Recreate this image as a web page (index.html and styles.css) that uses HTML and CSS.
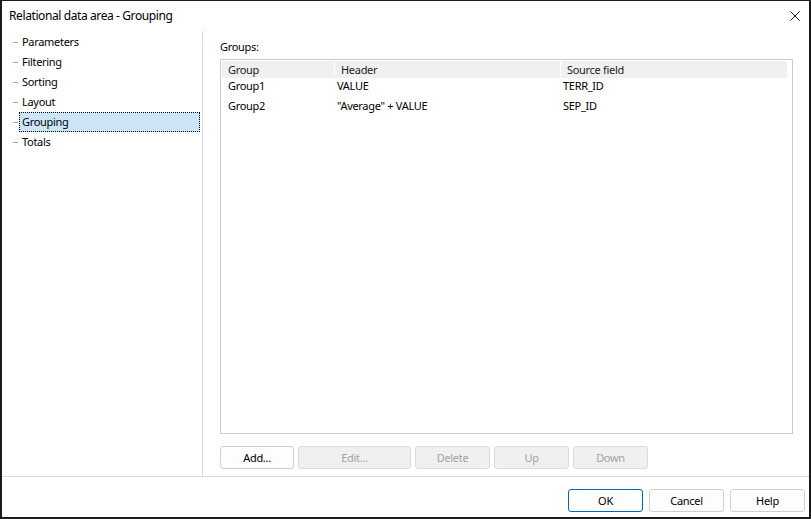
FILE: index.html
```html
<!DOCTYPE html>
<html lang="en">
<head>
    <meta charset="UTF-8">
    <title>Relational data area - Grouping</title>
    <link rel="stylesheet" href="styles.css">
</head>
<body>
    <div class="dialog">
        <div class="titlebar">
            <span class="title">Relational data area - Grouping</span>
            <svg class="close-icon" width="10" height="10" viewBox="0 0 10 10">
                <path d="M0.5 0.5 L9.5 9.5 M9.5 0.5 L0.5 9.5" stroke="#1a1a1a" stroke-width="1" fill="none"/>
            </svg>
        </div>

        <div class="content">
            <ul class="nav">
                <li class="nav-item"><span class="nav-label">Parameters</span></li>
                <li class="nav-item"><span class="nav-label">Filtering</span></li>
                <li class="nav-item"><span class="nav-label">Sorting</span></li>
                <li class="nav-item"><span class="nav-label">Layout</span></li>
                <li class="nav-item selected"><span class="nav-label">Grouping</span></li>
                <li class="nav-item"><span class="nav-label">Totals</span></li>
            </ul>

            <div class="main">
                <div class="groups-label">Groups:</div>
                <div class="list">
                    <div class="list-header">
                        <div class="col-head">Group</div>
                        <div class="col-head">Header</div>
                        <div class="col-head">Source field</div>
                    </div>
                    <div class="list-row">
                        <div class="cell first">Group1</div>
                        <div class="cell">VALUE</div>
                        <div class="cell">TERR_ID</div>
                    </div>
                    <div class="list-row">
                        <div class="cell first">Group2</div>
                        <div class="cell">"Average" + VALUE</div>
                        <div class="cell">SEP_ID</div>
                    </div>
                </div>
                <div class="list-buttons">
                    <button class="btn btn-add">Add...</button>
                    <button class="btn btn-wide" disabled>Edit...</button>
                    <button class="btn" disabled>Delete</button>
                    <button class="btn" disabled>Up</button>
                    <button class="btn" disabled>Down</button>
                </div>
            </div>
        </div>

        <div class="footer">
            <button class="btn btn-default">OK</button>
            <button class="btn">Cancel</button>
            <button class="btn">Help</button>
        </div>
    </div>
</body>
</html>
```

FILE: styles.css
```css
:root {
    --frame: #1c1c1c;
    --line: #d9d9d9;
    --list-border: #cbcbcb;
    --header-bg: #f0f0f0;
    --select-bg: #cde6f7;
    --text: #000;
    --text-disabled: #a3a3a3;
}

* {
    box-sizing: border-box;
}

body {
    margin: 0;
    font-family: 'Noto Sans', 'Open Sans', Arial, sans-serif;
    font-size: 11px;
    letter-spacing: -0.3px;
    color: var(--text);
    background: #fff;
}

.dialog {
    width: 811px;
    height: 519px;
    display: flex;
    flex-direction: column;
    border: 2px solid var(--frame);
    border-top-width: 1px;
    background: #fff;
}

.titlebar {
    height: 30px;
    display: flex;
    align-items: center;
    justify-content: space-between;
    padding: 0 9px 0 7px;
}

.title {
    font-size: 12px;
    letter-spacing: -0.4px;
    padding-bottom: 1px;
}

.close-icon {
    margin-bottom: 1px;
}

.content {
    flex: 1;
    display: flex;
    min-height: 0;
}

/* left tree */
.nav {
    width: 201px;
    margin: 0;
    padding: 1px 0 0 0;
    list-style: none;
    border-right: 1px solid var(--line);
}

.nav-item {
    height: 20px;
    display: flex;
    align-items: center;
    position: relative;
    padding-left: 17px;
}

.nav-item::before {
    content: '';
    position: absolute;
    left: 11px;
    top: 10px;
    width: 5px;
    height: 1px;
    background: #a9a9a9;
}

.nav-label {
    display: flex;
    align-items: center;
    height: 20px;
    padding: 0 0 2px 2px;
    flex: 1;
    margin-right: 2px;
    border: 1px solid transparent;
}

.selected .nav-label {
    background: var(--select-bg);
    border: 1px dotted #000;
    position: relative;
}

/* main panel */
.main {
    flex: 1;
    display: flex;
    flex-direction: column;
    padding: 8px 16px 7px 17px;
}

.groups-label {
    height: 16px;
    line-height: 16px;
    margin-bottom: 4px;
}

.list {
    flex: 1;
    border: 1px solid var(--list-border);
    padding: 1px;
}

.list-header,
.list-row {
    display: grid;
    grid-template-columns: 113px 226px 227px;
}

.list-header {
    height: 17px;
}

.col-head {
    background: var(--header-bg);
    border-right: 1px solid #fff;
    line-height: 17px;
    padding-left: 6px;
    color: #1e1e1e;
}

.list-row {
    height: 20px;
}

.cell {
    line-height: 16px;
    padding-left: 2px;
}

.cell.first {
    padding-left: 6px;
}

.list-buttons {
    display: flex;
    gap: 4px;
    margin-top: 12px;
}

/* buttons */
.btn {
    width: 75px;
    height: 23px;
    padding: 0;
    font: inherit;
    letter-spacing: inherit;
    color: var(--text);
    background: #fdfdfd;
    border: 1px solid #d0d0d0;
    border-radius: 3px;
}

.btn-add {
    width: 74px;
}

.btn-wide {
    width: 113px;
}

.btn:disabled {
    background: #f0f0f0;
    border-color: #dcdcdc;
    color: var(--text-disabled);
}

.btn-default {
    border-color: #0067c0;
}

.footer {
    height: 41px;
    border-top: 1px solid var(--line);
    display: flex;
    justify-content: flex-end;
    gap: 6px;
    padding: 12px 4px 0 0;
}
```
